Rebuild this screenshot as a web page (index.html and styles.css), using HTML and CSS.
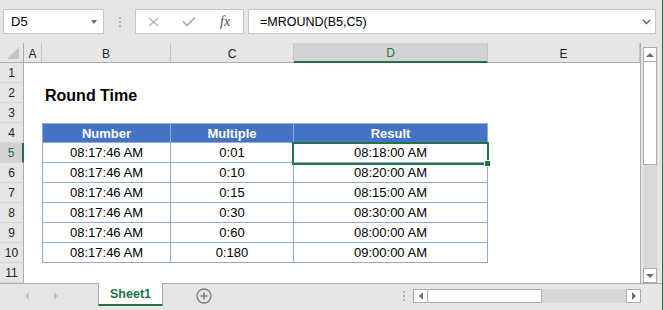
FILE: index.html
```html
<!DOCTYPE html>
<html lang="en">
<head>
  <meta charset="UTF-8" />
  <title>Round Time</title>
  <link rel="stylesheet" href="styles.css">
</head>
<body>
  <div class="app">
    <div class="toolbar">
      <div class="namebox">
        <span>D5</span>
        <span class="drop"></span>
      </div>
      <div class="grip"><i></i><i></i><i></i></div>
      <div class="fxbox">
        <span class="fbtn">
          <svg width="11" height="10" viewBox="0 0 11 10"><path d="M1 1L10 9M10 1L1 9" stroke="#b3b3b3" stroke-width="1.3" fill="none"/></svg>
        </span>
        <span class="fbtn">
          <svg width="14" height="11" viewBox="0 0 14 11"><path d="M1 5.5L5 9.5L13 1.5" stroke="#b3b3b3" stroke-width="1.8" fill="none"/></svg>
        </span>
        <span class="fbtn fx">fx</span>
      </div>
      <div class="formula">
        <span>=MROUND(B5,C5)</span>
        <svg width="9" height="6" viewBox="0 0 9 6"><path d="M1 1L4.5 4.5L8 1" stroke="#666" stroke-width="1.5" fill="none"/></svg>
      </div>
    </div>

    <div class="sheet">
      <div class="grid">
        <!-- column headers -->
        <div class="corner">
          <svg width="14" height="14" viewBox="0 0 14 14"><path d="M13 1V13H1Z" fill="#c3c3c3"/></svg>
        </div>
        <div class="ch">A</div>
        <div class="ch">B</div>
        <div class="ch">C</div>
        <div class="ch sel">D</div>
        <div class="ch">E</div>

        <div class="rh">1</div><div></div><div></div><div></div><div></div><div></div>

        <div class="rh">2</div><div></div><div class="title">Round Time</div><div></div><div></div><div></div>

        <div class="rh">3</div><div></div><div></div><div></div><div></div><div></div>

        <div class="rh">4</div><div></div>
        <div class="t th first">Number</div>
        <div class="t th">Multiple</div>
        <div class="t th">Result</div>
        <div></div>

        <div class="rh sel">5</div><div></div>
        <div class="t first">08:17:46 AM</div>
        <div class="t">0:01</div>
        <div class="t active">08:18:00 AM<span class="selbox"></span><span class="handle"></span></div>
        <div></div>

        <div class="rh">6</div><div></div>
        <div class="t first">08:17:46 AM</div>
        <div class="t">0:10</div>
        <div class="t">08:20:00 AM</div>
        <div></div>

        <div class="rh">7</div><div></div>
        <div class="t first">08:17:46 AM</div>
        <div class="t">0:15</div>
        <div class="t">08:15:00 AM</div>
        <div></div>

        <div class="rh">8</div><div></div>
        <div class="t first">08:17:46 AM</div>
        <div class="t">0:30</div>
        <div class="t">08:30:00 AM</div>
        <div></div>

        <div class="rh">9</div><div></div>
        <div class="t first">08:17:46 AM</div>
        <div class="t">0:60</div>
        <div class="t">08:00:00 AM</div>
        <div></div>

        <div class="rh">10</div><div></div>
        <div class="t first">08:17:46 AM</div>
        <div class="t">0:180</div>
        <div class="t">09:00:00 AM</div>
        <div></div>

        <div class="rh">11</div><div></div><div></div><div></div><div></div><div></div>
      </div>

      <div class="vscroll">
        <div class="vbtn"><span class="tri up"></span></div>
        <div class="vthumb"></div>
        <div class="vtrack"></div>
        <div class="vbtn"><span class="tri down"></span></div>
      </div>
    </div>

    <div class="tabs">
      <div class="tabnav">
        <span class="tri left light"></span>
        <span class="tri right light"></span>
      </div>
      <div class="sheettab">Sheet1</div>
      <div class="addsheet">
        <svg width="16" height="16" viewBox="0 0 16 16">
          <circle cx="8" cy="8" r="7" stroke="#7a7a7a" stroke-width="1.3" fill="none"/>
          <path d="M8 4.5V11.5M4.5 8H11.5" stroke="#7a7a7a" stroke-width="1.5"/>
        </svg>
      </div>
      <div class="spacer"></div>
      <div class="grip hgrip"><i></i><i></i><i></i></div>
      <div class="hscroll">
        <div class="hbtn"><span class="tri left"></span></div>
        <div class="hthumb"></div>
        <div class="htrack"></div>
        <div class="hbtn"><span class="tri right"></span></div>
      </div>
    </div>
  </div>
</body>
</html>
```

FILE: styles.css
```css
:root {
  --chrome: #e6e6e6;
  --header-line: #ababab;
  --excel-green: #217346;
  --table-blue: #4472c4;
  --table-line: #8ea9db;
}

body {
  margin: 0;
  font-family: "Liberation Sans", Arial, sans-serif;
  color: #000;
}

.app {
  width: 662px;
  height: 310px;
  border-right: 1px solid var(--excel-green);
  background: var(--chrome);
  display: flex;
  flex-direction: column;
  overflow: hidden;
}

/* formula bar */

.toolbar {
  height: 43px;
  display: flex;
  align-items: flex-start;
  padding: 9px 0 0 3px;
  box-sizing: border-box;
}

.namebox,
.fxbox,
.formula {
  height: 25px;
  box-sizing: border-box;
  background: white;
  border: 1px solid #c6c6c6;
  display: flex;
  align-items: center;
  font-size: 13px;
}

.namebox {
  width: 101px;
  padding: 0 6px 0 7px;
  justify-content: space-between;
}

.drop {
  width: 0;
  height: 0;
  border-left: 3.5px solid transparent;
  border-right: 3.5px solid transparent;
  border-top: 4px solid #6b6b6b;
}

.grip {
  width: 31px;
  height: 25px;
  display: flex;
  flex-direction: column;
  align-items: center;
  justify-content: center;
  gap: 2px;
}

.grip i {
  width: 2px;
  height: 2px;
  background: #b5b5b5;
}

.fxbox {
  width: 109px;
  justify-content: space-around;
}

.fbtn {
  width: 20px;
  display: flex;
  justify-content: center;
}

.fx {
  font-family: "Liberation Serif", "Times New Roman", serif;
  font-style: italic;
  font-size: 14px;
  color: #555;
}

.formula {
  width: 408px;
  margin-left: 4px;
  padding: 0 4px 0 11px;
  justify-content: space-between;
  font-size: 12.5px;
}

/* sheet grid */

.sheet {
  display: flex;
  height: 240px;
}

.grid {
  display: grid;
  grid-template-columns: 24px 18px 129px 123px 194px 152px;
  grid-auto-rows: 20px;
  background: white;
  border-right: 1px solid var(--header-line);
  font-size: 13px;
}

.corner,
.ch,
.rh {
  background: var(--chrome);
  box-sizing: border-box;
  display: flex;
  align-items: center;
  justify-content: center;
  font-size: 12px;
  color: #222;
}

.corner {
  border-right: 1px solid var(--header-line);
  border-bottom: 1px solid var(--header-line);
  align-items: flex-end;
  justify-content: flex-end;
  padding: 0 3px 2px 0;
}

.ch {
  border-right: 1px solid #c6c6c6;
  border-bottom: 1px solid var(--header-line);
  padding-top: 2px;
}

.ch.sel {
  background: #d2d2d2;
  color: var(--excel-green);
  border-bottom: 2px solid var(--excel-green);
}

.rh {
  border-right: 1px solid var(--header-line);
  border-bottom: 1px solid #d4d4d4;
  padding-top: 1px;
}

.rh.sel {
  background: #d2d2d2;
  color: var(--excel-green);
  border-right: 2px solid var(--excel-green);
}

.title {
  font-size: 16px;
  font-weight: bold;
  white-space: nowrap;
  padding: 3px 0 0 3px;
  line-height: 20px;
}

.t {
  box-sizing: border-box;
  border-right: 1px solid var(--table-line);
  border-bottom: 1px solid var(--table-line);
  display: flex;
  align-items: center;
  justify-content: center;
}

.t.first {
  border-left: 1px solid var(--table-line);
}

.t.th {
  background: var(--table-blue);
  color: white;
  font-weight: bold;
  border-top: 1px solid var(--table-line);
}

.active {
  position: relative;
}

.selbox {
  position: absolute;
  left: -2px;
  top: -1px;
  width: 197px;
  height: 23px;
  box-sizing: border-box;
  border: 2px solid var(--excel-green);
}

.handle {
  position: absolute;
  left: 190px;
  top: 17px;
  width: 5px;
  height: 5px;
  background: var(--excel-green);
  border: 1px solid white;
}

/* scroll bars */

.vscroll {
  width: 20px;
  padding: 4px 4px 0 2px;
  box-sizing: border-box;
  display: flex;
  flex-direction: column;
}

.vbtn,
.hbtn {
  background: white;
  border: 1px solid var(--header-line);
  box-sizing: border-box;
  display: flex;
  align-items: center;
  justify-content: center;
}

.vbtn {
  height: 15px;
}

.vthumb {
  height: 102px;
  background: white;
  border: 1px solid var(--header-line);
  border-top: none;
}

.vtrack,
.htrack {
  flex: 1;
  background: #d9d9d9;
}

.tri {
  width: 0;
  height: 0;
}

.tri.up {
  border-left: 4px solid transparent;
  border-right: 4px solid transparent;
  border-bottom: 4px solid #6e6e6e;
}

.tri.down {
  border-left: 4px solid transparent;
  border-right: 4px solid transparent;
  border-top: 4px solid #6e6e6e;
}

.tri.left {
  border-top: 4px solid transparent;
  border-bottom: 4px solid transparent;
  border-right: 4px solid #6e6e6e;
}

.tri.right {
  border-top: 4px solid transparent;
  border-bottom: 4px solid transparent;
  border-left: 4px solid #6e6e6e;
}

.tri.left.light {
  border-right-color: #c4c4c4;
}

.tri.right.light {
  border-left-color: #c4c4c4;
}

/* sheet tabs */

.tabs {
  flex: 1;
  display: flex;
  align-items: flex-start;
  border-top: 1px solid var(--header-line);
}

.tabnav {
  width: 98px;
  height: 24px;
  display: flex;
  align-items: center;
  gap: 25px;
  padding-left: 25px;
  box-sizing: border-box;
}

.sheettab {
  width: 65px;
  height: 23px;
  margin-top: -1px;
  box-sizing: border-box;
  background: white;
  border-left: 1px solid var(--header-line);
  border-right: 1px solid var(--header-line);
  border-bottom: 2px solid var(--excel-green);
  display: flex;
  align-items: center;
  justify-content: center;
  font-size: 12.5px;
  font-weight: bold;
  color: var(--excel-green);
}

.addsheet {
  margin: 4px 0 0 33px;
  display: flex;
}

.spacer {
  flex: 1;
}

.hgrip {
  width: 14px;
  height: 14px;
  margin: 5px 2px 0 0;
}

.hscroll {
  width: 228px;
  height: 14px;
  margin: 5px 21px 0 0;
  display: flex;
}

.hbtn {
  width: 15px;
}

.hthumb {
  width: 114px;
  background: white;
  border: 1px solid var(--header-line);
  border-left: none;
  box-sizing: border-box;
}
```
